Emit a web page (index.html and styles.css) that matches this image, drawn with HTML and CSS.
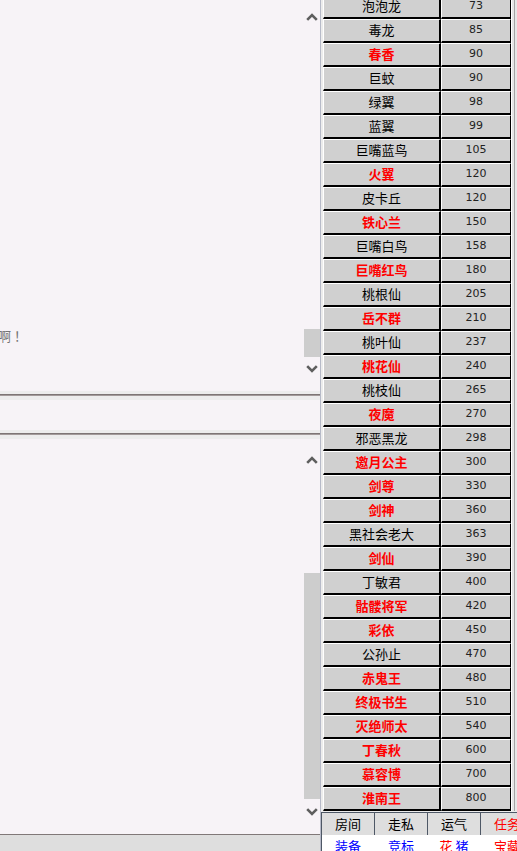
FILE: index.html
```html
<!DOCTYPE html>
<html lang="zh-CN">
<head>
<meta charset="utf-8">
<title>游戏</title>
<link rel="stylesheet" href="styles.css">
</head>
<body>
<div class="left">
  <div class="pane pane-upper">
    <div class="pane-content">
      <div class="msgs">
        <p class="msg">啊！</p>
      </div>
    </div>
    <div class="scrollbar">
      <div class="sb-btn"><svg viewBox="0 0 12 8"><polyline points="1.2,6.8 6,2 10.8,6.8" fill="none" stroke="#5e5e5e" stroke-width="2.6"/></svg></div>
      <div class="sb-track"><div class="sb-thumb"></div></div>
      <div class="sb-btn"><svg viewBox="0 0 12 8"><polyline points="1.2,1.2 6,6 10.8,1.2" fill="none" stroke="#5e5e5e" stroke-width="2.6"/></svg></div>
    </div>
  </div>
  <div class="divider"><div class="divider-line"></div></div>
  <div class="input"></div>
  <div class="divider"><div class="divider-line"></div></div>
  <div class="pane pane-lower">
    <div class="pane-content"></div>
    <div class="scrollbar">
      <div class="sb-btn"><svg viewBox="0 0 12 8"><polyline points="1.2,6.8 6,2 10.8,6.8" fill="none" stroke="#5e5e5e" stroke-width="2.6"/></svg></div>
      <div class="sb-track"><div class="sb-thumb"></div></div>
      <div class="sb-btn"><svg viewBox="0 0 12 8"><polyline points="1.2,1.2 6,6 10.8,1.2" fill="none" stroke="#5e5e5e" stroke-width="2.6"/></svg></div>
    </div>
  </div>
  <div class="status"></div>
</div>
<div class="right">
  <div class="list">
    <div class="table">
      <div class="row"><div class="cell name">泡泡龙</div><div class="cell num">73</div></div>
      <div class="row"><div class="cell name">毒龙</div><div class="cell num">85</div></div>
      <div class="row"><div class="cell name hot">春香</div><div class="cell num">90</div></div>
      <div class="row"><div class="cell name">巨蚊</div><div class="cell num">90</div></div>
      <div class="row"><div class="cell name">绿翼</div><div class="cell num">98</div></div>
      <div class="row"><div class="cell name">蓝翼</div><div class="cell num">99</div></div>
      <div class="row"><div class="cell name">巨嘴蓝鸟</div><div class="cell num">105</div></div>
      <div class="row"><div class="cell name hot">火翼</div><div class="cell num">120</div></div>
      <div class="row"><div class="cell name">皮卡丘</div><div class="cell num">120</div></div>
      <div class="row"><div class="cell name hot">铁心兰</div><div class="cell num">150</div></div>
      <div class="row"><div class="cell name">巨嘴白鸟</div><div class="cell num">158</div></div>
      <div class="row"><div class="cell name hot">巨嘴红鸟</div><div class="cell num">180</div></div>
      <div class="row"><div class="cell name">桃根仙</div><div class="cell num">205</div></div>
      <div class="row"><div class="cell name hot">岳不群</div><div class="cell num">210</div></div>
      <div class="row"><div class="cell name">桃叶仙</div><div class="cell num">237</div></div>
      <div class="row"><div class="cell name hot">桃花仙</div><div class="cell num">240</div></div>
      <div class="row"><div class="cell name">桃枝仙</div><div class="cell num">265</div></div>
      <div class="row"><div class="cell name hot">夜魔</div><div class="cell num">270</div></div>
      <div class="row"><div class="cell name">邪恶黑龙</div><div class="cell num">298</div></div>
      <div class="row"><div class="cell name hot">邀月公主</div><div class="cell num">300</div></div>
      <div class="row"><div class="cell name hot">剑尊</div><div class="cell num">330</div></div>
      <div class="row"><div class="cell name hot">剑神</div><div class="cell num">360</div></div>
      <div class="row"><div class="cell name">黑社会老大</div><div class="cell num">363</div></div>
      <div class="row"><div class="cell name hot">剑仙</div><div class="cell num">390</div></div>
      <div class="row"><div class="cell name">丁敏君</div><div class="cell num">400</div></div>
      <div class="row"><div class="cell name hot">骷髅将军</div><div class="cell num">420</div></div>
      <div class="row"><div class="cell name hot">彩依</div><div class="cell num">450</div></div>
      <div class="row"><div class="cell name">公孙止</div><div class="cell num">470</div></div>
      <div class="row"><div class="cell name hot">赤鬼王</div><div class="cell num">480</div></div>
      <div class="row"><div class="cell name hot">终极书生</div><div class="cell num">510</div></div>
      <div class="row"><div class="cell name hot">灭绝师太</div><div class="cell num">540</div></div>
      <div class="row"><div class="cell name hot">丁春秋</div><div class="cell num">600</div></div>
      <div class="row"><div class="cell name hot">慕容博</div><div class="cell num">700</div></div>
      <div class="row"><div class="cell name hot">淮南王</div><div class="cell num">800</div></div>
    </div>
    <div class="strip"><div class="strip-line"></div></div>
  </div>
  <div class="tabs">
    <div class="tab-row tab-row-top">
      <div class="tab">房间</div>
      <div class="tab">走私</div>
      <div class="tab">运气</div>
      <div class="tab red">任务</div>
    </div>
    <div class="tab-row tab-row-bottom">
      <div class="tab blue">装备</div>
      <div class="tab blue">竞标</div>
      <div class="tab"><span class="red">花</span> <span class="blue">猪</span></div>
      <div class="tab red">宝藏</div>
    </div>
  </div>
</div>
</body>
</html>
```

FILE: styles.css
```css
* { box-sizing: border-box; }
html, body { margin: 0; padding: 0; }
body {
  width: 517px;
  height: 851px;
  overflow: hidden;
  display: flex;
  font-family: "Noto Sans CJK SC", sans-serif;
  background: #ececec;
}

/* left side: chat panes */
.left {
  width: 321px;
  flex: none;
  border-right: 1px solid #b6bac8;
  display: flex;
  flex-direction: column;
  background: #f7f3f7;
}
.pane { display: flex; }
.pane-upper { height: 391px; }
.pane-lower { height: 396px; border-bottom: 1px solid #807878; }
.pane-content {
  flex: 1;
  display: flex;
  flex-direction: column;
  justify-content: flex-end;
  overflow: hidden;
}
.msgs { padding-bottom: 45px; }
.msg {
  margin: 0 0 0 -2px;
  font-size: 13px;
  line-height: 20px;
  letter-spacing: 3px;
  color: #727272;
  white-space: nowrap;
}
.scrollbar {
  width: 17px;
  flex: none;
  display: flex;
  flex-direction: column;
}
.pane-upper .scrollbar { padding: 9px 0 14px; }
.pane-lower .scrollbar { padding: 13px 0 14px; }
.sb-btn {
  height: 16px;
  display: flex;
  align-items: center;
  justify-content: center;
}
.sb-btn svg { width: 12px; height: 8px; display: block; }
.sb-track {
  flex: 1;
  display: flex;
  flex-direction: column;
  justify-content: flex-end;
}
.sb-thumb { background: #cdcdcd; margin: 0 0 4px 1px; }
.pane-upper .sb-thumb { height: 28px; }
.pane-lower .sb-thumb { height: 226px; margin-bottom: 5px; }
.divider { height: 9px; background: #ededed; padding-top: 3px; }
.divider-line {
  height: 2px;
  border-top: 1px solid #7e7676;
  border-bottom: 1px solid #a39b9b;
}
.input { height: 30px; }
.status { flex: 1; background: #dedede; }

/* right side: monster list */
.right {
  width: 196px;
  flex: none;
  display: flex;
  flex-direction: column;
  overflow: hidden;
}
.list {
  height: 811px;
  flex: none;
  display: flex;
  overflow: hidden;
  background: #ececec;
  padding-left: 2px;
}
.table { width: 188px; flex: none; margin-top: -5px; align-self: flex-start; }
.row {
  display: grid;
  grid-template-columns: 118px 70px;
  height: 24px;
}
.cell {
  background: #d0d0d0;
  border-top: 1px solid #fff;
  border-left: 1px solid #fff;
  border-bottom: 2px solid #000;
  text-align: center;
  line-height: 21px;
  overflow: hidden;
  white-space: nowrap;
}
.name { border-right: 2px solid #000; font-size: 13px; line-height: 19px; color: #000; }
.name.hot { color: #f00; font-weight: bold; }
.num {
  border-right: 1px solid #000;
  font-family: "DejaVu Sans", sans-serif;
  font-size: 11px;
  line-height: 20px;
  color: #222;
}
.strip {
  width: 6px;
  flex: none;
  border-left: 1px solid #fff;
  background: #e6e6e6;
  padding-left: 2px;
}
.strip-line { width: 1px; height: 100%; background: #a4a4a4; }

/* bottom tabs */
.tabs { flex: 1; padding-top: 1px; background: #ececec; }
.tab-row { display: flex; }
.tab-row-top {
  height: 23px;
  border-top: 1px solid #4e5866;
  background: #dedede;
}
.tab-row-bottom { height: 22px; background: #fff; }
.tab {
  width: 53px;
  flex: none;
  border-left: 1px solid #4e5866;
  text-align: center;
  font-size: 13px;
  line-height: 21px;
  color: #000;
  white-space: nowrap;
}
.tab-row-bottom .tab { border-left-color: #fff; }
.tab-row-bottom .tab:first-child { border-left-color: #4e5866; }
.red { color: #f00; }
.blue { color: #00f; }
```
